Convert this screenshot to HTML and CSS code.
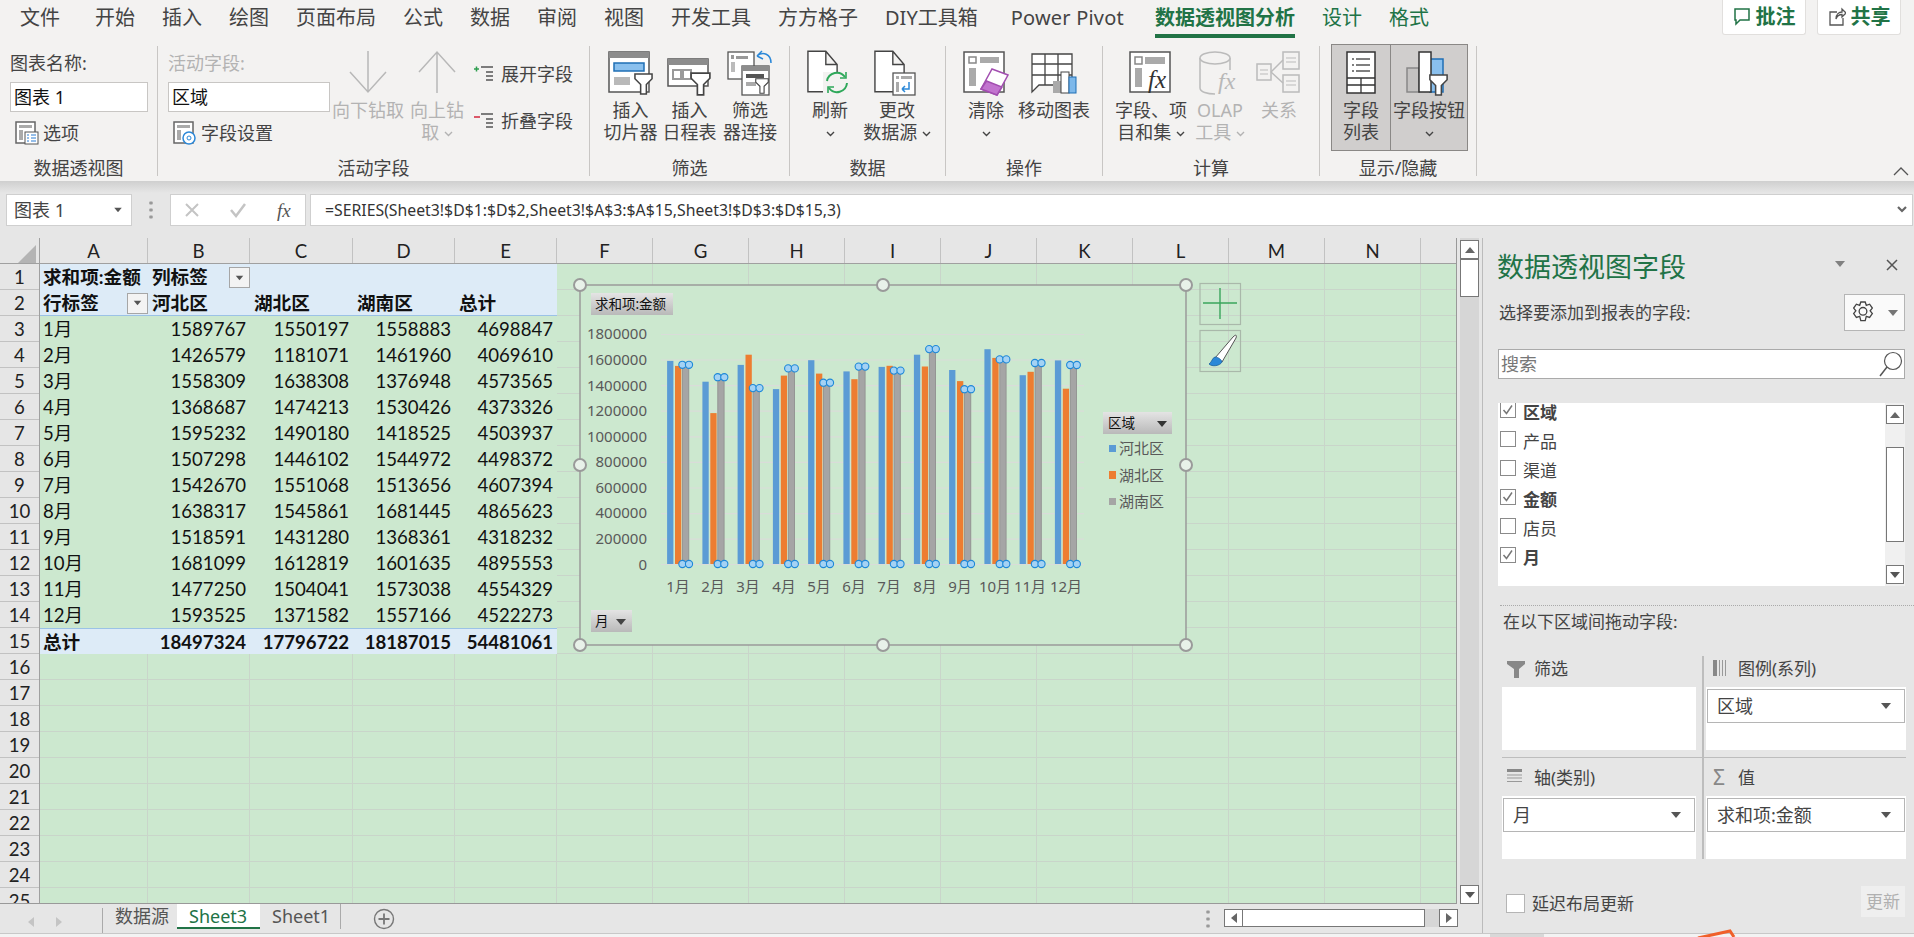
FILE: index.html
```html
<!DOCTYPE html>
<html lang="zh-CN">
  <head>
    <meta charset="utf-8" />
    <title>数据透视图字段 - Excel</title>
    <link rel="stylesheet" href="styles.css">
  </head>
  <body>
    <!-- shared icon parts -->
    <svg class="defs">
      <symbol id="funnel" viewBox="0 0 20 23"><path d="M1 1H19V6L13 12V22H7V12L1 6Z" fill="#fff" stroke="#444" stroke-width="1.6"/></symbol>
      <symbol id="chev" viewBox="0 0 9 6"><path d="M1 1l3.5 3.5L8 1" fill="none" stroke="currentColor" stroke-width="1.4"/></symbol>
      <symbol id="doc" viewBox="0 0 34 46"><path d="M1 1H20L32 15V44H1Z M20 1V15H32" fill="#fff" stroke="#444" stroke-width="1.5"/></symbol>
      <symbol id="dl" viewBox="0 0 12 8"><path d="M1 1H11L6 7Z" fill="#555"/></symbol>
      <symbol id="ul" viewBox="0 0 12 8"><path d="M1 7H11L6 1Z" fill="#666"/></symbol>
      <symbol id="tick" viewBox="0 0 16 16"><path d="M3.5 8l3 3.5L12 3.5" fill="none" stroke="#777" stroke-width="1.5"/></symbol>
    </svg>

    <header class="ribbon">
      <nav class="tabs">
        <span class="first">文件</span><span>开始</span><span>插入</span><span>绘图</span><span>页面布局</span><span>公式</span><span>数据</span><span>审阅</span><span>视图</span><span>开发工具</span><span>方方格子</span><span>DIY工具箱</span><span class="pp">Power Pivot</span><span class="active">数据透视图分析</span><span class="ctx">设计</span><span class="ctx">格式</span>
        <div class="share">
          <button class="sbtn"><svg width="18" height="20" viewBox="0 0 18 20"><path d="M2 2H16V13H7L3 17V13H2Z" fill="none" stroke="#217346" stroke-width="1.5"/></svg>批注</button>
          <button class="sbtn"><svg width="18" height="20" viewBox="0 0 18 20"><path d="M9 5H2V18H15V11M8 12C8 7 11 5 14 5V2L18 6L14 10V7.5C11 7.5 9 9 8 12Z" fill="none" stroke="#555" stroke-width="1.3"/></svg>共享</button>
        </div>
      </nav>
      <div class="groups">
        <section class="rgroup g1">
          <div class="rbody stack">
            <div class="rline">图表名称:</div>
            <div class="rinput w138">图表 1</div>
            <div class="rrow"><svg width="24" height="24" viewBox="0 0 24 24"><rect x="1" y="1" width="19" height="21" fill="#fff" stroke="#666" stroke-width="1.5"/><rect x="4" y="4" width="13" height="3" fill="#aaa"/><rect x="4" y="9" width="4" height="10" fill="#aaa"/><rect x="10" y="11" width="13" height="12" fill="#fff" stroke="#555"/><path d="M12 14h2M16 14h5M12 17h2M16 17h5M12 20h2M16 20h5" stroke="#2b7cd3"/></svg>选项</div>
          </div>
          <div class="rlabel">数据透视图</div>
        </section>

        <section class="rgroup g2">
          <div class="rbody">
            <div class="stack w172">
              <div class="rline off">活动字段:</div>
              <div class="rinput w162">区域</div>
              <div class="rrow"><svg width="24" height="24" viewBox="0 0 24 24"><rect x="1" y="1" width="19" height="21" fill="#fff" stroke="#666" stroke-width="1.5"/><rect x="4" y="4" width="13" height="3" fill="#aaa"/><rect x="4" y="9" width="4" height="10" fill="#aaa"/><circle cx="16" cy="17" r="6" fill="#fff" stroke="#2b88d8" stroke-width="1.5"/><circle cx="16" cy="17" r="2" fill="none" stroke="#2b88d8"/></svg>字段设置</div>
            </div>
            <div class="rbtn off b70">
              <div class="ricon"><svg width="38" height="44" viewBox="0 0 38 44"><path d="M19 1V42M1 22L19 42L37 22" fill="none" stroke="#b8b8b8" stroke-width="1.5"/></svg></div>
              <div>向下钻取</div>
            </div>
            <div class="rbtn off b62">
              <div class="ricon"><svg width="38" height="44" viewBox="0 0 38 44"><path d="M19 43V2M1 22L19 2L37 22" fill="none" stroke="#b8b8b8" stroke-width="1.5"/></svg></div>
              <div>向上钻</div>
              <div>取 <svg class="chev"><use href="#chev"/></svg></div>
            </div>
            <div class="fold">
              <div class="rrow"><svg width="22" height="18" viewBox="0 0 22 18"><path d="M1 4h5M3.5 1.5v5" stroke="#2e9e4f" stroke-width="1.5"/><path d="M8 2h12M13 7h7M13 11h7M13 15h7" stroke="#555" stroke-width="1.3"/></svg>展开字段</div>
              <div class="rrow"><svg width="22" height="18" viewBox="0 0 22 18"><path d="M1 5h6" stroke="#d9475a" stroke-width="1.8"/><path d="M8 2h12M13 7h7M13 11h7M13 15h7" stroke="#555" stroke-width="1.3"/></svg>折叠字段</div>
            </div>
          </div>
          <div class="rlabel">活动字段</div>
        </section>

        <section class="rgroup g3">
          <div class="rbody">
            <div class="rbtn b59">
              <div class="ricon"><svg width="46" height="46" viewBox="0 0 46 46"><rect x="1" y="2" width="40" height="40" fill="#fff" stroke="#555" stroke-width="1.5"/><rect x="1" y="2" width="40" height="6" fill="#8c8c8c"/><rect x="6" y="13" width="30" height="8" fill="#8ac0ee" stroke="#1f6fb5" stroke-width="1.5"/><rect x="6" y="27" width="16" height="8" fill="#b9b9b9"/><use href="#funnel" x="26" y="23" width="19" height="22"/></svg></div>
              <div>插入</div><div>切片器</div>
            </div>
            <div class="rbtn b59">
              <div class="ricon"><svg width="46" height="46" viewBox="0 0 46 46"><rect x="1" y="9" width="40" height="27" fill="#fff" stroke="#555" stroke-width="1.5"/><rect x="1" y="9" width="40" height="6" fill="#8c8c8c"/><rect x="6" y="20" width="8" height="9" fill="none" stroke="#999" stroke-width="2"/><rect x="16" y="20" width="8" height="9" fill="none" stroke="#999" stroke-width="2"/><use href="#funnel" x="23" y="22" width="21" height="24"/></svg></div>
              <div>插入</div><div>日程表</div>
            </div>
            <div class="rbtn b62">
              <div class="ricon"><svg width="46" height="46" viewBox="0 0 46 46"><rect x="1" y="2" width="26" height="27" fill="#fff" stroke="#555" stroke-width="1.3"/><rect x="4" y="5" width="3" height="4" fill="#999"/><rect x="9" y="6" width="12" height="3" fill="#999"/><rect x="4" y="12" width="4" height="10" fill="#bbb"/><rect x="15" y="16" width="27" height="29" fill="#fff" stroke="#555" stroke-width="1.3"/><rect x="15" y="16" width="27" height="5" fill="#8c8c8c"/><rect x="19" y="24" width="18" height="4" fill="#555"/><rect x="19" y="32" width="10" height="4" fill="#aaa"/><use href="#funnel" x="28" y="28" width="14" height="16"/><path d="M30 6C36 1 44 4 44 13M30 6l5-5M30 6l6 3" fill="none" stroke="#2b88d8" stroke-width="1.5"/></svg></div>
              <div>筛选</div><div>器连接</div>
            </div>
          </div>
          <div class="rlabel">筛选</div>
        </section>

        <section class="rgroup g4">
          <div class="rbody">
            <div class="rbtn b56">
              <div class="ricon"><svg width="46" height="46" viewBox="0 0 46 46"><use href="#doc" x="0" y="0" width="32" height="44"/><rect x="16" y="22" width="28" height="22" fill="#f3f2f1"/><path d="M20 31A10 10 0 0 1 38 27M40 33A10 10 0 0 1 22 38" fill="none" stroke="#2ea85a" stroke-width="2"/><path d="M33 28h6v-6M27 37h-6v6" fill="none" stroke="#2ea85a" stroke-width="1.6"/></svg></div>
              <div>刷新</div>
              <div><svg class="chev"><use href="#chev"/></svg></div>
            </div>
            <div class="rbtn b78">
              <div class="ricon"><svg width="46" height="46" viewBox="0 0 46 46"><use href="#doc" x="0" y="0" width="32" height="44"/><rect x="19" y="23" width="22" height="22" fill="#fff" stroke="#555" stroke-width="1.3"/><rect x="22" y="26" width="3" height="3" fill="#aaa"/><rect x="27" y="26" width="11" height="3" fill="#aaa"/><rect x="22" y="32" width="3" height="10" fill="#aaa"/><path d="M35 32v7h-6M28 39l3-3M28 39l3 3" fill="none" stroke="#2b88d8" stroke-width="1.5"/></svg></div>
              <div>更改</div>
              <div>数据源 <svg class="chev"><use href="#chev"/></svg></div>
            </div>
          </div>
          <div class="rlabel">数据</div>
        </section>

        <section class="rgroup g5">
          <div class="rbody">
            <div class="rbtn b60">
              <div class="ricon"><svg width="46" height="46" viewBox="0 0 46 46"><rect x="1" y="2" width="40" height="40" fill="#fff" stroke="#555" stroke-width="1.5"/><rect x="6" y="7" width="7" height="6" fill="none" stroke="#888" stroke-width="1.5"/><rect x="17" y="7" width="19" height="6" fill="#aaa"/><rect x="6" y="18" width="7" height="18" fill="#aaa"/><path d="M29 19L45 25L34 45L18 39Z" fill="#fff" stroke="#a24eb0" stroke-width="1.5"/><path d="M23.5 31L39 37L34 45L18 39Z" fill="#c274cf" stroke="#a24eb0" stroke-width="1.5"/></svg></div>
              <div>清除</div>
              <div><svg class="chev"><use href="#chev"/></svg></div>
            </div>
            <div class="rbtn b76">
              <div class="ricon"><svg width="46" height="46" viewBox="0 0 46 46"><path d="M1 4H41V35H8L1 42V4ZM1 14H41M1 25H41M14 4V35M27 4V35" fill="#fff" stroke="#444" stroke-width="1.3"/><rect x="22" y="31" width="8" height="12" fill="#aaa"/><rect x="30" y="22" width="8" height="21" fill="#fff" stroke="#444"/><rect x="38" y="27" width="7" height="16" fill="#7db8ea" stroke="#1f6fb5"/></svg></div>
              <div>移动图表</div>
            </div>
          </div>
          <div class="rlabel">操作</div>
        </section>

        <section class="rgroup g6">
          <div class="rbody">
            <div class="rbtn b76">
              <div class="ricon"><svg width="46" height="46" viewBox="0 0 46 46"><rect x="2" y="2" width="40" height="40" fill="#fff" stroke="#555" stroke-width="1.5"/><rect x="7" y="7" width="7" height="7" fill="none" stroke="#888" stroke-width="1.5"/><rect x="17" y="7" width="20" height="7" fill="#aaa"/><rect x="7" y="18" width="7" height="19" fill="#aaa"/><text class="fx" x="20" y="38" font-size="25">fx</text></svg></div>
              <div>字段、项</div>
              <div>目和集 <svg class="chev"><use href="#chev"/></svg></div>
            </div>
            <div class="rbtn off b62">
              <div class="ricon"><svg width="46" height="46" viewBox="0 0 46 46"><path d="M3 8V38C3 46 33 46 33 38V8" fill="none" stroke="#bbb" stroke-width="1.5"/><ellipse cx="18" cy="8" rx="15" ry="6" fill="#f3f2f1" stroke="#bbb" stroke-width="1.5"/><rect x="18" y="20" width="26" height="26" fill="#f3f2f1"/><text class="fx off" x="21" y="39" font-size="24">fx</text></svg></div>
              <div>OLAP</div>
              <div>工具 <svg class="chev"><use href="#chev"/></svg></div>
            </div>
            <div class="rbtn off b56">
              <div class="ricon"><svg width="46" height="46" viewBox="0 0 46 46"><g fill="#f3f2f1" stroke="#bbb" stroke-width="1.5"><rect x="1" y="14" width="14" height="16"/><rect x="27" y="2" width="16" height="17"/><rect x="27" y="25" width="16" height="17"/><path d="M15 22L27 10M15 22L27 33"/></g><path d="M4 20h8M4 24h8M30 8h10M30 12h10M30 31h10M30 35h10" stroke="#bbb"/></svg></div>
              <div>关系</div>
            </div>
          </div>
          <div class="rlabel">计算</div>
        </section>

        <section class="rgroup g7">
          <div class="rbody">
            <div class="rbtn pressed b60">
              <div class="ricon"><svg width="46" height="46" viewBox="0 0 46 46"><rect x="9" y="2" width="28" height="41" fill="#fff" stroke="#333" stroke-width="1.5"/><path d="M14 9h2M18 9h14M14 15h2M18 15h14M14 21h2M18 21h14" stroke="#555" stroke-width="1.3"/><path d="M9 28H37M9 35H37M23 28V43" stroke="#333" stroke-width="1.3"/></svg></div>
              <div>字段</div><div>列表</div>
            </div>
            <div class="rbtn pressed b77">
              <div class="ricon"><svg width="46" height="46" viewBox="0 0 46 46"><rect x="1" y="18" width="12" height="24" fill="#c4c2c1" stroke="#888" stroke-width="1.5"/><rect x="24" y="9" width="13" height="33" fill="#8ac0ee" stroke="#1f6fb5" stroke-width="1.5"/><rect x="13" y="2" width="12" height="40" fill="#fff" stroke="#333" stroke-width="1.5"/><use href="#funnel" x="21" y="24" width="23" height="22"/></svg></div>
              <div>字段按钮</div>
              <div><svg class="chev"><use href="#chev"/></svg></div>
            </div>
          </div>
          <div class="rlabel">显示/隐藏</div>
        </section>

        <svg class="collapse" width="16" height="10" viewBox="0 0 16 10"><path d="M1 9L8 2L15 9" fill="none" stroke="#555" stroke-width="1.3"/></svg>
      </div>
    </header>

    <div class="formula">
      <div class="namebox">图表 1<svg width="10" height="6" viewBox="0 0 12 8"><use href="#dl" width="12" height="8"/></svg></div>
      <div class="grip"></div>
      <div class="fxbox">
        <svg width="16" height="16" viewBox="0 0 16 16"><path d="M2 2L14 14M14 2L2 14" stroke="#c4c4c4" stroke-width="2"/></svg>
        <svg width="18" height="16" viewBox="0 0 18 16"><path d="M2 8L7 14L16 2" fill="none" stroke="#c4c4c4" stroke-width="2.5"/></svg>
        <span class="fxtext">fx</span>
      </div>
      <div class="fbar">=SERIES(Sheet3!$D$1:$D$2,Sheet3!$A$3:$A$15,Sheet3!$D$3:$D$15,3)<svg width="10" height="8" viewBox="0 0 10 8"><path d="M1 1L5 5L9 1" fill="none" stroke="#666" stroke-width="2.2"/></svg></div>
    </div>

    <div class="workspace">
      <div class="book">
        <div class="sheet-row">
          <div class="sheet">
            <div class="col-heads">
              <div class="corner"><svg width="18" height="18" viewBox="0 0 18 18"><path d="M18 0V18H0Z" fill="#b4b4b4"/></svg></div>
              <div class="ch">A</div><div class="ch">B</div><div class="ch">C</div><div class="ch">D</div><div class="ch">E</div><div class="ch">F</div><div class="ch">G</div><div class="ch">H</div><div class="ch">I</div><div class="ch">J</div><div class="ch">K</div><div class="ch">L</div><div class="ch">M</div><div class="ch">N</div>
            </div>
            <div class="sheet-body">
              <div class="row-heads">
                <div>1</div><div>2</div><div>3</div><div>4</div><div>5</div><div>6</div><div>7</div><div>8</div><div>9</div><div>10</div><div>11</div><div>12</div><div>13</div><div>14</div><div>15</div><div>16</div><div>17</div><div>18</div><div>19</div><div>20</div><div>21</div><div>22</div><div>23</div><div>24</div><div>25</div>
              </div>
              <div class="cells">
                <div class="cells-left">
                  <table class="pivot">
                    <tr class="hd"><td><b>求和项:金额</b></td><td><b>列标签</b><span class="fbtn"><svg width="9" height="6" viewBox="0 0 12 8"><use href="#dl" width="12" height="8"/></svg></span></td><td></td><td></td><td></td></tr>
                    <tr class="hd hd2"><td><b>行标签</b><span class="fbtn"><svg width="9" height="6" viewBox="0 0 12 8"><use href="#dl" width="12" height="8"/></svg></span></td><td class="l"><b>河北区</b></td><td class="l"><b>湖北区</b></td><td class="l"><b>湖南区</b></td><td class="l"><b>总计</b></td></tr>
                    <tr><td>1月</td><td>1589767</td><td>1550197</td><td>1558883</td><td>4698847</td></tr>
                    <tr><td>2月</td><td>1426579</td><td>1181071</td><td>1461960</td><td>4069610</td></tr>
                    <tr><td>3月</td><td>1558309</td><td>1638308</td><td>1376948</td><td>4573565</td></tr>
                    <tr><td>4月</td><td>1368687</td><td>1474213</td><td>1530426</td><td>4373326</td></tr>
                    <tr><td>5月</td><td>1595232</td><td>1490180</td><td>1418525</td><td>4503937</td></tr>
                    <tr><td>6月</td><td>1507298</td><td>1446102</td><td>1544972</td><td>4498372</td></tr>
                    <tr><td>7月</td><td>1542670</td><td>1551068</td><td>1513656</td><td>4607394</td></tr>
                    <tr><td>8月</td><td>1638317</td><td>1545861</td><td>1681445</td><td>4865623</td></tr>
                    <tr><td>9月</td><td>1518591</td><td>1431280</td><td>1368361</td><td>4318232</td></tr>
                    <tr><td>10月</td><td>1681099</td><td>1612819</td><td>1601635</td><td>4895553</td></tr>
                    <tr><td>11月</td><td>1477250</td><td>1504041</td><td>1573038</td><td>4554329</td></tr>
                    <tr><td>12月</td><td>1593525</td><td>1371582</td><td>1557166</td><td>4522273</td></tr>
                    <tr class="hd tot"><td><b>总计</b></td><td><b>18497324</b></td><td><b>17796722</b></td><td><b>18187015</b></td><td><b>54481061</b></td></tr>
                  </table>
                </div>
                <div class="cells-right"></div>

                <!-- chart floats over the grid, drawn in page coordinates -->
                <svg class="chart" width="680" height="390" viewBox="570 270 680 390">
                  <defs>
                    <linearGradient id="btn" x1="0" y1="0" x2="0" y2="1"><stop offset="0" stop-color="#e4e4e4"/><stop offset="1" stop-color="#b9b9b9"/></linearGradient>
                    <g id="pt"><circle cx="-3.3" r="3.6" fill="#a4d2f4" stroke="#1e88d8" stroke-width="1.1"/><circle cx="3.3" r="3.6" fill="#a4d2f4" stroke="#1e88d8" stroke-width="1.1"/></g>
                  </defs>
                  <rect x="580" y="285" width="606" height="360" fill="#cce8cf" stroke="#9a9a9a" stroke-width="1.5"/>
                  <g stroke="#d9dcd9" stroke-width="1.2"><path d="M661 334.5H1084M661 360H1084M661 385.6H1084M661 411.2H1084M661 436.8H1084M661 462.4H1084M661 488H1084M661 513.6H1084M661 539.2H1084M661 564.5H1084"/></g>
                  <g class="ax" text-anchor="end">
                    <text x="647" y="339">1800000</text><text x="647" y="365">1600000</text><text x="647" y="391">1400000</text><text x="647" y="416">1200000</text><text x="647" y="442">1000000</text><text x="647" y="467">800000</text><text x="647" y="493">600000</text><text x="647" y="518">400000</text><text x="647" y="544">200000</text><text x="647" y="570">0</text>
                  </g>
                  <g class="ax" text-anchor="middle">
                    <text x="678" y="592">1月</text><text x="713" y="592">2月</text><text x="748" y="592">3月</text><text x="784" y="592">4月</text><text x="819" y="592">5月</text><text x="854" y="592">6月</text><text x="889" y="592">7月</text><text x="925" y="592">8月</text><text x="960" y="592">9月</text><text x="995" y="592">10月</text><text x="1030" y="592">11月</text><text x="1066" y="592">12月</text>
                  </g>
                  <g fill="#5b9bd5">
                    <rect x="667.1" y="360.9" width="6.3" height="203.1"/><rect x="702.4" y="381.7" width="6.3" height="182.3"/><rect x="737.6" y="364.9" width="6.3" height="199.1"/><rect x="772.9" y="389.1" width="6.3" height="174.9"/><rect x="808.1" y="360.2" width="6.3" height="203.8"/><rect x="843.4" y="371.4" width="6.3" height="192.6"/><rect x="878.6" y="366.9" width="6.3" height="197.1"/><rect x="913.9" y="354.7" width="6.3" height="209.3"/><rect x="949.1" y="370" width="6.3" height="194"/><rect x="984.4" y="349.2" width="6.3" height="214.8"/><rect x="1019.6" y="375.2" width="6.3" height="188.8"/><rect x="1054.9" y="360.4" width="6.3" height="203.6"/>
                  </g>
                  <g fill="#ed7d31">
                    <rect x="675" y="365.9" width="6.3" height="198.1"/><rect x="710.3" y="413.1" width="6.3" height="150.9"/><rect x="745.5" y="354.7" width="6.3" height="209.3"/><rect x="780.8" y="375.6" width="6.3" height="188.4"/><rect x="816" y="373.6" width="6.3" height="190.4"/><rect x="851.3" y="379.2" width="6.3" height="184.8"/><rect x="886.5" y="365.8" width="6.3" height="198.2"/><rect x="921.8" y="366.5" width="6.3" height="197.5"/><rect x="957" y="381.1" width="6.3" height="182.9"/><rect x="992.3" y="357.9" width="6.3" height="206.1"/><rect x="1027.5" y="371.8" width="6.3" height="192.2"/><rect x="1062.8" y="388.7" width="6.3" height="175.3"/>
                  </g>
                  <g fill="#a5a5a5" stroke="#8d8d8d" stroke-width=".8">
                    <rect x="682.5" y="364.8" width="6.3" height="199.2"/><rect x="717.8" y="377.2" width="6.3" height="186.8"/><rect x="753" y="388.1" width="6.3" height="175.9"/><rect x="788.3" y="368.4" width="6.3" height="195.6"/><rect x="823.5" y="382.7" width="6.3" height="181.3"/><rect x="858.8" y="366.6" width="6.3" height="197.4"/><rect x="894" y="370.6" width="6.3" height="193.4"/><rect x="929.3" y="349.1" width="6.3" height="214.9"/><rect x="964.5" y="389.2" width="6.3" height="174.8"/><rect x="999.8" y="359.4" width="6.3" height="204.6"/><rect x="1035" y="363" width="6.3" height="201"/><rect x="1070.3" y="365" width="6.3" height="199"/>
                  </g>
                  <use href="#pt" x="685.7" y="364.8"/><use href="#pt" x="721" y="377.2"/><use href="#pt" x="756.2" y="388.1"/><use href="#pt" x="791.5" y="368.4"/><use href="#pt" x="826.7" y="382.7"/><use href="#pt" x="862" y="366.6"/><use href="#pt" x="897.2" y="370.6"/><use href="#pt" x="932.5" y="349.1"/><use href="#pt" x="967.7" y="389.2"/><use href="#pt" x="1003" y="359.4"/><use href="#pt" x="1038.2" y="363"/><use href="#pt" x="1073.5" y="365"/>
                  <use href="#pt" x="685.7" y="564"/><use href="#pt" x="721" y="564"/><use href="#pt" x="756.2" y="564"/><use href="#pt" x="791.5" y="564"/><use href="#pt" x="826.7" y="564"/><use href="#pt" x="862" y="564"/><use href="#pt" x="897.2" y="564"/><use href="#pt" x="932.5" y="564"/><use href="#pt" x="967.7" y="564"/><use href="#pt" x="1003" y="564"/><use href="#pt" x="1038.2" y="564"/><use href="#pt" x="1073.5" y="564"/>

                  <rect x="591" y="293" width="82" height="22" fill="url(#btn)"/>
                  <text class="fld" x="595" y="309">求和项:金额</text>
                  <rect x="591" y="610" width="41" height="22" fill="url(#btn)"/>
                  <text class="fld" x="595" y="626">月</text>
                  <path d="M616 619H626L621 625Z" fill="#444"/>
                  <rect x="1103" y="412" width="69" height="22" fill="url(#btn)"/>
                  <text class="fld" x="1108" y="428">区域</text>
                  <path d="M1157 421H1167L1162 427Z" fill="#333"/>
                  <rect x="1109" y="445" width="7" height="7" fill="#5b9bd5"/><text class="ax" x="1119" y="454">河北区</text>
                  <rect x="1109" y="471" width="7" height="8" fill="#ed7d31"/><text class="ax" x="1119" y="481">湖北区</text>
                  <rect x="1109" y="498" width="7" height="7" fill="#a5a5a5"/><text class="ax" x="1119" y="507">湖南区</text>

                  <g fill="#e8f1e9" stroke="#9a9a9a" stroke-width="2">
                    <circle cx="580" cy="285" r="6"/><circle cx="883" cy="285" r="6"/><circle cx="1186" cy="285" r="6"/><circle cx="580" cy="465" r="6"/><circle cx="1186" cy="465" r="6"/><circle cx="580" cy="645" r="6"/><circle cx="883" cy="645" r="6"/><circle cx="1186" cy="645" r="6"/>
                  </g>
                  <rect x="1200" y="283.5" width="40.5" height="41" fill="none" stroke="#a9b8aa" stroke-width="1.2"/>
                  <path d="M1203 303H1237M1220 288V319" stroke="#3aa55c" stroke-width="1.4"/>
                  <rect x="1200" y="330.5" width="40.5" height="41" fill="none" stroke="#a9b8aa" stroke-width="1.2"/>
                  <path d="M1215 358L1233 337C1236 334 1237 335 1236 338L1222 362Z" fill="#fff" stroke="#555" stroke-width="1"/>
                  <path d="M1215 357C1212 358 1212 362 1209 364C1212 367 1220 366 1222 362C1222 360 1218 357 1215 357Z" fill="#2b88d8" stroke="#1a5f9e" stroke-width=".8"/>
                </svg>
              </div>
            </div>
          </div>
          <div class="vscroll">
            <div class="sb-btn"><svg width="12" height="8"><use href="#ul" width="12" height="8"/></svg></div>
            <div class="sb-thumb"></div>
            <div class="sb-fill"></div>
            <div class="sb-btn"><svg width="12" height="8"><use href="#dl" width="12" height="8"/></svg></div>
          </div>
        </div>

        <div class="sheet-tabs">
          <div class="nav-arrows">
            <svg width="8" height="12" viewBox="0 0 8 12"><path d="M7 1V11L1 6Z" fill="#c4c4c4"/></svg>
            <svg width="8" height="12" viewBox="0 0 8 12"><path d="M1 1V11L7 6Z" fill="#c4c4c4"/></svg>
          </div>
          <div class="stab">数据源</div>
          <div class="stab on">Sheet3</div>
          <div class="stab last">Sheet1</div>
          <svg class="addsheet" width="22" height="22" viewBox="0 0 22 22"><circle cx="11" cy="11" r="9.5" fill="none" stroke="#777" stroke-width="1.4"/><path d="M5.5 11H16.5M11 5.5V16.5" stroke="#777" stroke-width="1.8"/></svg>
          <div class="grip tall"></div>
          <div class="hscroll">
            <div class="hs-btn"><svg width="8" height="12" viewBox="0 0 8 12"><path d="M7 1V11L1 6Z" fill="#666"/></svg></div>
            <div class="hs-thumb"></div>
            <div class="hs-fill"></div>
            <div class="hs-btn"><svg width="8" height="12" viewBox="0 0 8 12"><path d="M1 1V11L7 6Z" fill="#666"/></svg></div>
          </div>
        </div>
      </div>

      <aside class="pane">
        <div class="pane-head">
          <h2>数据透视图字段</h2>
          <svg class="pane-menu" width="12" height="8"><use href="#dl" width="12" height="8" opacity=".7"/></svg>
          <svg class="pane-x" width="12" height="12" viewBox="0 0 12 12"><path d="M1 1L11 11M11 1L1 11" stroke="#555" stroke-width="1.5"/></svg>
        </div>
        <div class="pane-sub">
          <span>选择要添加到报表的字段:</span>
          <div class="gear">
            <svg width="24" height="24" viewBox="0 0 24 24"><path d="M10 2h4l1 3 3-1 2.5 3.5-2 2.5 2 2.5L18 16l-3-1-1 4h-4l-1-4-3 1-2.5-3.5 2-2.5-2-2.5L6 4l3 1Z" fill="none" stroke="#444" stroke-width="1.2"/><circle cx="12" cy="10.5" r="3.5" fill="none" stroke="#444" stroke-width="1.2"/></svg>
            <svg width="12" height="8"><use href="#dl" width="12" height="8" opacity=".8"/></svg>
          </div>
        </div>
        <div class="search">
          <span>搜索</span>
          <svg width="24" height="26" viewBox="0 0 24 26"><circle cx="14" cy="10" r="8.5" fill="none" stroke="#555" stroke-width="1.2"/><path d="M8 16L1 25" stroke="#555" stroke-width="1.5"/></svg>
        </div>
        <div class="flist">
          <div class="fitems">
            <div class="fitem on"><i class="cb"><svg width="16" height="16"><use href="#tick" width="16" height="16"/></svg></i>区域</div>
            <div class="fitem"><i class="cb"></i>产品</div>
            <div class="fitem"><i class="cb"></i>渠道</div>
            <div class="fitem on"><i class="cb"><svg width="16" height="16"><use href="#tick" width="16" height="16"/></svg></i>金额</div>
            <div class="fitem"><i class="cb"></i>店员</div>
            <div class="fitem on"><i class="cb"><svg width="16" height="16"><use href="#tick" width="16" height="16"/></svg></i>月</div>
          </div>
          <div class="fscroll">
            <div class="sb-btn"><svg width="12" height="8"><use href="#ul" width="12" height="8"/></svg></div>
            <div class="fs-thumb"></div>
            <div class="sb-btn"><svg width="12" height="8"><use href="#dl" width="12" height="8"/></svg></div>
          </div>
        </div>
        <div class="dots"></div>
        <div class="drag-note">在以下区域间拖动字段:</div>
        <div class="areas">
          <div class="area left top">
            <div class="alabel"><span class="aicon"><svg width="18" height="18" viewBox="0 0 18 18"><path d="M0 1H18V4L12 9V18H7V9L0 4Z" fill="#888"/></svg></span>筛选</div>
            <div class="abox"></div>
          </div>
          <div class="area top">
            <div class="alabel"><span class="aicon"><svg width="15" height="16" viewBox="0 0 15 16"><rect width="4" height="16" fill="#888"/><path d="M6.5 0V16M9.500 0V16M12.5 0V16" stroke="#999"/></svg></span>图例(系列)</div>
            <div class="abox"><div class="pill">区域<svg width="12" height="8"><use href="#dl" width="12" height="8"/></svg></div></div>
          </div>
          <div class="area left">
            <div class="alabel"><span class="aicon"><svg width="16" height="14" viewBox="0 0 16 14"><rect width="15" height="3" fill="#888"/><path d="M0 6H15M0 9H15M0 12.5H15" stroke="#999"/></svg></span>轴(类别)</div>
            <div class="abox"><div class="pill">月<svg width="12" height="8"><use href="#dl" width="12" height="8"/></svg></div></div>
          </div>
          <div class="area">
            <div class="alabel"><span class="aicon sigma">Σ</span>值</div>
            <div class="abox"><div class="pill">求和项:金额<svg width="12" height="8"><use href="#dl" width="12" height="8"/></svg></div></div>
          </div>
        </div>
        <div class="pane-foot">
          <i class="cb big"></i>
          <span>延迟布局更新</span>
          <button class="update">更新</button>
        </div>
      </aside>
    </div>

    <footer class="status"><div class="status-seg"></div></footer>
    <svg class="scribble" width="40" height="12" viewBox="0 0 40 12"><path d="M2 13L34 6L38 12" fill="none" stroke="#f0602a" stroke-width="3"/></svg>
  </body>
</html>
```
FILE: styles.css
```css
* {
  box-sizing: border-box;
}
html,
body {
  margin: 0;
  height: 100%;
}
body {
  position: relative;
  width: 1914px;
  height: 937px;
  overflow: hidden;
  display: flex;
  flex-direction: column;
  background: #e6e6e6;
  color: #444;
  font-family: "Noto Sans", "Noto Sans CJK SC", sans-serif;
  font-size: 18px;
  line-height: 22px;
}
.defs {
  display: none;
}
svg {
  flex: none;
}

/* ribbon */
.ribbon {
  height: 181px;
  background: #f3f2f1;
}
.tabs {
  height: 38px;
  display: flex;
  gap: 27px;
  padding-left: 20px;
  font-size: 20px;
  line-height: 36px;
  white-space: nowrap;
}
.tabs .first {
  margin-right: 8px;
}
.tabs .pp {
  margin-left: 6px;
  letter-spacing: .2px;
}
.tabs .active {
  color: #217346;
  font-weight: 700;
  border-bottom: 4px solid #217346;
  margin-left: 4px;
}
.tabs .ctx {
  color: #217346;
}
.share {
  margin-left: auto;
  display: flex;
  gap: 11px;
  padding-right: 13px;
}
.sbtn {
  width: 84px;
  height: 35px;
  display: flex;
  align-items: center;
  justify-content: center;
  gap: 5px;
  background: #fff;
  border: 1px solid #e1dfdd;
  border-top: 0;
  border-radius: 0 0 3px 3px;
  color: #217346;
  font: 700 20px/1 "Noto Sans", "Noto Sans CJK SC", sans-serif;
}
.groups {
  position: relative;
  height: 130px;
  margin-top: 8px;
  display: flex;
}
.rgroup {
  display: flex;
  flex-direction: column;
  border-right: 1px solid #c8c6c4;
}
.g1 { width: 158px; }
.g2 { width: 432px; }
.g3 { width: 200px; }
.g4 { width: 156px; }
.g5 { width: 157px; }
.g6 { width: 217px; }
.g7 { width: 157px; }
.rbody {
  flex: 1;
  display: flex;
  padding-top: 3px;
}
.g1 .rbody { padding-left: 10px; }
.g2 .rbody { padding-left: 10px; }
.g3 .rbody { padding-left: 11px; }
.g4 .rbody { padding-left: 12px; }
.g5 .rbody { padding-left: 10px; }
.g6 .rbody { padding-left: 10px; }
.g7 .rbody { padding-left: 11px; }
.rlabel {
  height: 16px;
  line-height: 16px;
  text-align: center;
  white-space: nowrap;
}
.stack {
  display: flex;
  flex-direction: column;
}
.stack.rbody {
  padding-top: 6px;
}
.stack.w172 {
  width: 165px;
  padding-top: 3px;
}
.rline {
  height: 22px;
  margin-bottom: 8px;
  white-space: nowrap;
}
.off {
  color: #b3b3b3;
}
.rinput {
  height: 30px;
  background: #fff;
  border: 1px solid #c8c6c4;
  color: #111;
  padding-left: 3px;
  line-height: 28px;
}
.w138 { width: 138px; }
.w162 { width: 162px; }
.rrow {
  display: flex;
  align-items: center;
  gap: 4px;
  height: 24px;
  margin: 9px 0 0 5px;
  white-space: nowrap;
}
.rbtn {
  display: flex;
  flex-direction: column;
  align-items: center;
  line-height: 22px;
  white-space: nowrap;
}
.ricon {
  height: 50px;
  display: flex;
  justify-content: center;
  padding-top: 1px;
}
.b56 { width: 56px; }
.b59 { width: 59px; }
.b60 { width: 60px; }
.b62 { width: 62px; }
.b70 { width: 70px; margin-right: 3px; }
.b76 { width: 76px; }
.b77 { width: 77px; }
.b78 { width: 78px; }
.fold {
  margin: 13px 0 0 5px;
}
.fold .rrow {
  margin: 0 0 23px;
  gap: 6px;
}
.chev {
  width: 9px;
  height: 6px;
  vertical-align: 2px;
}
.pressed {
  height: 107px;
  margin-top: -5px;
  padding-top: 4px;
  background: #d0cecd;
  border: 1px solid #8a8886;
}
.pressed + .pressed {
  border-left: 0;
}
.collapse {
  position: absolute;
  right: 5px;
  bottom: 0;
}
.fx {
  font-family: "Liberation Serif", serif;
  font-style: italic;
  fill: #333;
}
.fx.off {
  fill: #b8b8b8;
}

/* formula bar */
.formula {
  height: 57px;
  padding: 13px 1px 12px 6px;
  display: flex;
  align-items: stretch;
  background: linear-gradient(#cfcfcf, #e6e6e6 12px);
  font-size: 16px;
}
.namebox {
  width: 126px;
  background: #fff;
  border: 1px solid #cfcfcf;
  padding: 0 8px 0 7px;
  display: flex;
  align-items: center;
  justify-content: space-between;
  font-size: 18px;
}
.grip {
  width: 38px;
  background: radial-gradient(circle, #999 1.5px, transparent 2px) center / 4px 7px repeat-y;
  margin: 6px 0;
}
.fxbox {
  width: 136px;
  background: #fff;
  border: 1px solid #cfcfcf;
  display: flex;
  align-items: center;
  gap: 29px;
  padding-left: 13px;
}
.fxtext {
  font: italic 19px/1 "Liberation Serif", serif;
  color: #555;
  margin-left: 1px;
}
.fbar {
  flex: 1;
  margin-left: 4px;
  background: #fff;
  border: 1px solid #cfcfcf;
  display: flex;
  align-items: center;
  justify-content: space-between;
  padding: 0 5px 0 14px;
  font-size: 15.8px;
  color: #333;
}

/* sheet */
.workspace {
  height: 695px;
  display: flex;
}
.book {
  width: 1482px;
  display: flex;
  flex-direction: column;
}
.sheet-row {
  height: 666px;
  display: flex;
}
.sheet {
  width: 1457px;
  border-right: 1px solid #999;
  border-bottom: 1px solid #999;
  overflow: hidden;
  font-family: Lato, "Noto Sans CJK SC", sans-serif;
  font-size: 18.6px;
  color: #111;
}
.col-heads {
  height: 26px;
  display: flex;
  background: #e6e6e6;
  border-bottom: 1px solid #a0a0a0;
  line-height: 26px;
}
.corner {
  width: 40px;
  border-right: 1px solid #a0a0a0;
  padding: 5px 0 0 18px;
}
.ch {
  width: 96px;
  text-align: center;
  border-right: 1px solid #c2c2c2;
  color: #222;
}
.ch:nth-child(2) { width: 108px; }
.ch:nth-child(3),
.ch:nth-child(5),
.ch:nth-child(6) { width: 102px; }
.ch:nth-child(4) { width: 103px; }
.sheet-body {
  display: flex;
}
.row-heads {
  width: 40px;
  flex: none;
  border-right: 1px solid #a0a0a0;
  background: #e6e6e6;
}
.row-heads div {
  height: 26px;
  line-height: 26px;
  text-align: center;
  border-bottom: 1px solid #c2c2c2;
  color: #222;
}
.cells {
  position: relative;
  flex: 1;
  height: 640px;
  display: flex;
  --line: #c9d5ca;
  background-color: #cce8cf;
}
.cells-left {
  width: 517px;
  flex: none;
  background-image:
    repeating-linear-gradient(to bottom, transparent 0 25px, var(--line) 25px 26px),
    linear-gradient(var(--line), var(--line)),
    linear-gradient(var(--line), var(--line)),
    linear-gradient(var(--line), var(--line)),
    linear-gradient(var(--line), var(--line)),
    linear-gradient(var(--line), var(--line));
  background-repeat: repeat, no-repeat, no-repeat, no-repeat, no-repeat, no-repeat;
  background-size: auto, 1px 100%, 1px 100%, 1px 100%, 1px 100%, 1px 100%;
  background-position: 0 0, 107px 0, 209px 0, 312px 0, 414px 0, 516px 0;
}
.cells-right {
  flex: 1;
  background-image:
    repeating-linear-gradient(to bottom, transparent 0 25px, var(--line) 25px 26px),
    repeating-linear-gradient(to right, transparent 0 95px, var(--line) 95px 96px);
}
.pivot {
  width: 517px;
  table-layout: fixed;
  border-collapse: separate;
  border-spacing: 0;
}
.pivot td {
  height: 26px;
  width: 102px;
  padding: 0 4px;
  background: #cce8cf;
  text-align: right;
  line-height: 24px;
  white-space: nowrap;
}
.pivot td:first-child {
  width: 108px;
  padding-left: 3px;
  text-align: left;
}
.pivot td:nth-child(3) {
  width: 103px;
}
.pivot td.l,
.pivot tr:first-child td {
  text-align: left;
}
.pivot .hd td {
  background: #ddebf7;
}
.pivot .hd2 td {
  border-bottom: 1px solid #9bc2e6;
}
.pivot .tot td {
  border-top: 1px solid #9bc2e6;
}
.fbtn {
  float: right;
  width: 21px;
  height: 21px;
  margin: 2px -4px 0 0;
  background: #f3f3f3;
  border: 1px solid #a6a6a6;
  display: flex;
  align-items: center;
  justify-content: center;
}
.chart {
  position: absolute;
  left: 530px;
  top: 6px;
  font-family: "Noto Sans", "Noto Sans CJK SC", sans-serif;
}
.ax {
  font-size: 15px;
  fill: #595959;
}
.fld {
  font-size: 13.5px;
  fill: #111;
}

/* scrollbars */
.vscroll {
  width: 19px;
  margin: 0 3px;
  padding-top: 2px;
  background: #d6d6d6;
  display: flex;
  flex-direction: column;
}
.sb-btn {
  height: 19px;
  flex: none;
  background: #fff;
  border: 1.5px solid #777;
  display: flex;
  align-items: center;
  justify-content: center;
}
.sb-thumb {
  height: 38px;
  background: #fff;
  border: 1.5px solid #777;
}
.sb-fill {
  flex: 1;
}
.sheet-tabs {
  height: 29px;
  display: flex;
  align-items: flex-start;
  font-size: 18px;
}
.nav-arrows {
  width: 103px;
  height: 25px;
  padding: 8px 0 0 27px;
  display: flex;
  gap: 20px;
  border-right: 1px solid #aaa;
  margin-top: 4px;
}
.stab {
  height: 25px;
  padding: 0 12px;
  line-height: 24px;
  color: #555;
  white-space: nowrap;
}
.stab:nth-child(2) {
  width: 74px;
}
.stab.on {
  width: 83px;
  background: #fff;
  color: #217346;
  border-bottom: 2px solid #217346;
}
.stab.last {
  width: 81px;
  border-right: 1px solid #aaa;
}
.addsheet {
  margin: 4px 0 0 32px;
}
.grip.tall {
  width: 6px;
  height: 20px;
  margin: 5px 0 0 810px;
}
.hscroll {
  width: 234px;
  height: 18px;
  margin: 5px 0 0 13px;
  background: #d6d6d6;
  display: flex;
}
.hs-btn {
  width: 19px;
  background: #fff;
  border: 1.5px solid #777;
  display: flex;
  align-items: center;
  justify-content: center;
}
.hs-thumb {
  width: 182px;
  background: #fff;
  border: 1.5px solid #777;
  border-left: 0;
}
.hs-fill {
  flex: 1;
}

/* field pane */
.pane {
  width: 432px;
  border-left: 1px solid #bbb;
  font-size: 17px;
}
.pane-head {
  height: 47px;
  padding: 11px 0 0 14px;
  display: flex;
}
.pane-head h2 {
  margin: 0;
  width: 337px;
  color: #217346;
  font-size: 27px;
  font-weight: 400;
  line-height: 36px;
}
.pane-menu {
  margin-top: 11px;
}
.pane-x {
  margin: 10px 0 0 40px;
}
.pane-sub {
  height: 37px;
  margin: 9px 9px 0 16px;
  display: flex;
  align-items: center;
  justify-content: space-between;
}
.gear {
  width: 61px;
  height: 37px;
  background: #fafafa;
  border: 1px solid #b5b5b5;
  display: flex;
  align-items: center;
  justify-content: center;
  gap: 12px;
}
.gear svg:first-child {
  transform: scale(1.1);
}
.search {
  height: 30px;
  margin: 18px 9px 0 15px;
  padding: 0 1px 0 2px;
  background: #fff;
  border: 1px solid #aaa;
  display: flex;
  align-items: center;
  justify-content: space-between;
  font-size: 18px;
  color: #777;
}
.flist {
  height: 183px;
  margin: 24px 9px 0 15px;
  background: #fff;
  display: flex;
  overflow: hidden;
}
.fitems {
  flex: 1;
  margin-top: -5px;
}
.fitem {
  height: 29px;
  padding-left: 2px;
  display: flex;
  align-items: center;
  gap: 7px;
}
.fitem.on {
  font-weight: 700;
}
.cb {
  width: 16px;
  height: 16px;
  flex: none;
  background: #fff;
  border: 1px solid #8a8a8a;
  display: block;
  margin-bottom: 5px;
}
.cb svg {
  display: block;
  margin: -1px;
}
.fscroll {
  width: 20px;
  padding: 2px 1px;
  background: #f0f0f0;
  display: flex;
  flex-direction: column;
  justify-content: space-between;
}
.fs-thumb {
  height: 95px;
  margin-top: 13px;
  margin-bottom: 13px;
  background: #fff;
  border: 1.5px solid #777;
}
.dots {
  margin: 19px 0 0 17px;
  border-top: 1px dotted #aaa;
}
.drag-note {
  margin: 5px 0 0 20px;
  height: 22px;
  line-height: 22px;
}
.areas {
  margin: 23px 8px 0 19px;
  display: grid;
  grid-template-columns: 202px 202px;
}
.area.left {
  border-right: 2px solid #bdbdbd;
}
.area.top {
  height: 102px;
  border-bottom: 1px solid #bdbdbd;
}
.area:not(.left) {
  padding-left: 2px;
}
.alabel {
  height: 38px;
  padding-top: 8px;
  display: flex;
  align-items: flex-start;
  line-height: 24px;
}
.area.top .alabel {
  height: 31px;
  padding-top: 1px;
}
.aicon {
  width: 32px;
  padding: 3px 0 0 5px;
  display: block;
  flex: none;
}
.aicon svg {
  display: block;
}
.area:not(.left) .aicon {
  padding-left: 7px;
}
.sigma {
  color: #888;
  font-size: 21px;
  line-height: 18px;
  padding-top: 2px;
}
.abox {
  height: 63px;
  width: 200px;
  background: #fff;
  padding: 2px 1px;
}
.left .abox {
  width: 194px;
}
.pill {
  height: 34px;
  padding: 0 12px 0 9px;
  border: 1px solid #b5b5b5;
  display: flex;
  align-items: center;
  justify-content: space-between;
  font-size: 18px;
}
.pane-foot {
  height: 31px;
  margin: 27px 9px 0 23px;
  display: flex;
  align-items: center;
}
.cb.big {
  width: 19px;
  height: 19px;
  border-color: #b5b5b5;
  margin: 4px 7px 0 0;
}
.pane-foot span {
  margin-top: 4px;
}
.update {
  margin-left: auto;
  width: 44px;
  height: 31px;
  padding: 0;
  border: 0;
  background: #efefef;
  color: #b0b0b0;
  font: 17px/1 "Noto Sans", "Noto Sans CJK SC", sans-serif;
}

/* status strip */
.status {
  height: 4px;
  background: #f3f3f3;
  border-top: 1px solid #c8c8c8;
}
.status-seg {
  width: 54px;
  height: 3px;
  margin-left: 1490px;
  background: #d8d8d8;
}
.scribble {
  position: absolute;
  left: 1696px;
  top: 925px;
}
```
